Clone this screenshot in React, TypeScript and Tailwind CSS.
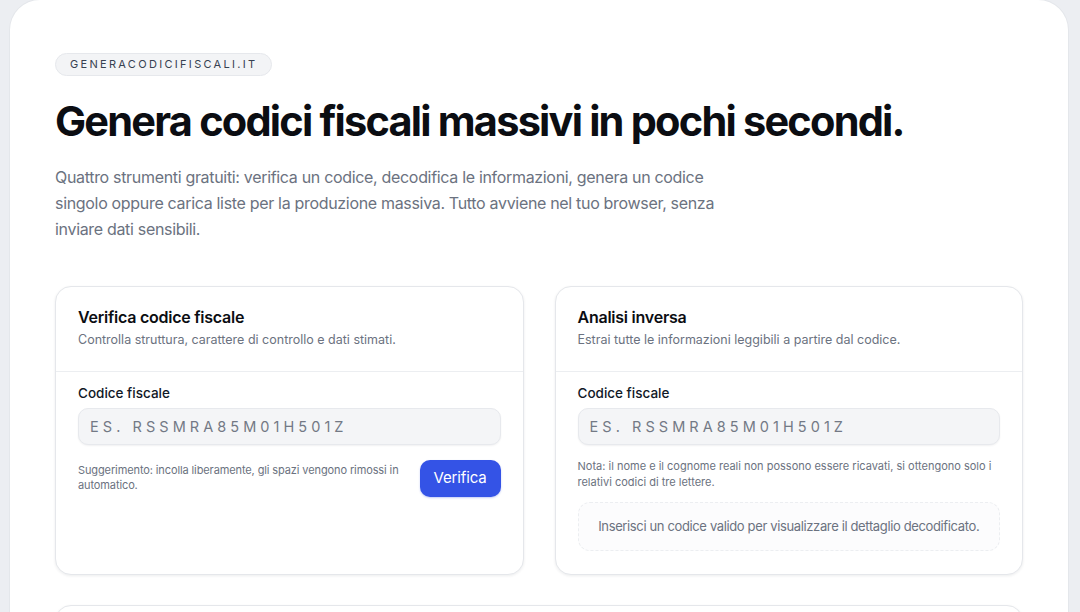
export default function App() {
  return (
    <div className="min-h-screen bg-[#eceef2] pl-[10px] pr-[12px]" style={{ fontFamily: 'Inter, "Noto Sans", sans-serif' }}>
      <main className="min-h-[700px] rounded-[30px] bg-white px-[45px] pt-[50px] shadow-[0_0_0_1px_rgba(15,23,42,0.03)]">
        {/* Hero */}
        <div className="inline-flex h-[23px] items-center rounded-full border border-[#e6e8ec] bg-[#f3f4f6] px-[14px] text-[11px] tracking-[0.21em] text-[#374151]">
          GENERACODICIFISCALI.IT
        </div>
        <h1 className="mt-[19px] text-[41.5px] leading-[52px] font-bold tracking-[-0.043em] text-[#0b0d12]">
          Genera codici fiscali massivi in pochi secondi.
        </h1>
        <p className="mt-[17px] max-w-[675px] text-[16px] leading-[26px] tracking-[-0.02em] text-[#6b7280]">
          Quattro strumenti gratuiti: verifica un codice, decodifica le informazioni, genera un codice singolo oppure carica liste per la produzione massiva. Tutto avviene nel tuo browser, senza inviare dati sensibili.
        </p>

        {/* Tools */}
        <div className="mt-[44px] grid grid-cols-2 gap-[31px]">
          <section className="flex h-[289px] flex-col rounded-2xl border border-[#e5e7eb] bg-white shadow-[0_1px_3px_rgba(15,23,42,0.08)]">
            <header className="border-b border-[#eceef1] px-[22px] pt-[20px] pb-[23px]">
              <h2 className="text-[16px] leading-[20px] font-semibold tracking-[-0.015em] text-[#0b0d12]">Verifica codice fiscale</h2>
              <p className="mt-[5px] text-[12.5px] leading-[16px] text-[#6b7280]">Controlla struttura, carattere di controllo e dati stimati.</p>
            </header>
            <div className="px-[22px] pt-[13px]">
              <label className="block text-[13.5px] leading-[16px] font-medium text-[#111827]">Codice fiscale</label>
              <input
                placeholder="ES. RSSMRA85M01H501Z"
                className="mt-[7px] h-[37px] w-full rounded-[10px] border border-[#e7e9ed] bg-[#f4f5f7] px-[11px] text-[14.5px] tracking-[0.28em] text-[#111827] shadow-[0_1px_2px_rgba(15,23,42,0.06)] outline-none placeholder:text-[#737985]"
              />
              <div className="mt-[15px] flex items-start justify-between gap-3">
                <p className="mt-[3px] max-w-[335px] text-[11px] leading-[15px] tracking-[-0.01em] text-[#6b7280]">
                  Suggerimento: incolla liberamente, gli spazi vengono rimossi in automatico.
                </p>
                <button className="h-[37px] shrink-0 rounded-[10px] bg-[#3453e6] px-[14px] text-[15px] tracking-[-0.01em] text-white shadow-[0_1px_2px_rgba(52,83,230,0.3)]">
                  Verifica
                </button>
              </div>
            </div>
          </section>

          <section className="flex h-[289px] flex-col rounded-2xl border border-[#e5e7eb] bg-white shadow-[0_1px_3px_rgba(15,23,42,0.08)]">
            <header className="border-b border-[#eceef1] px-[22px] pt-[20px] pb-[23px]">
              <h2 className="text-[16px] leading-[20px] font-semibold tracking-[-0.015em] text-[#0b0d12]">Analisi inversa</h2>
              <p className="mt-[5px] text-[12.5px] leading-[16px] text-[#6b7280]">Estrai tutte le informazioni leggibili a partire dal codice.</p>
            </header>
            <div className="px-[22px] pt-[13px]">
              <label className="block text-[13.5px] leading-[16px] font-medium text-[#111827]">Codice fiscale</label>
              <input
                placeholder="ES. RSSMRA85M01H501Z"
                className="mt-[7px] h-[37px] w-full rounded-[10px] border border-[#e7e9ed] bg-[#f4f5f7] px-[11px] text-[14.5px] tracking-[0.28em] text-[#111827] shadow-[0_1px_2px_rgba(15,23,42,0.06)] outline-none placeholder:text-[#737985]"
              />
              <p className="mt-[13px] text-[11px] leading-[16px] text-[#6b7280]">
                Nota: il nome e il cognome reali non possono essere ricavati, si ottengono solo i relativi codici di tre lettere.
              </p>
              <div className="mt-[12px] flex h-[49px] items-center justify-center whitespace-nowrap rounded-xl border border-dashed border-[#eceef1] bg-[#fcfcfd] text-[13px] tracking-[-0.028em] text-[#6b7280]">
                Inserisci un codice valido per visualizzare il dettaglio decodificato.
              </div>
            </div>
          </section>
        </div>

        <section className="mt-[30px] h-[200px] rounded-2xl border border-[#e5e7eb] bg-white shadow-[0_1px_3px_rgba(15,23,42,0.08)]" />
      </main>
    </div>
  );
}
